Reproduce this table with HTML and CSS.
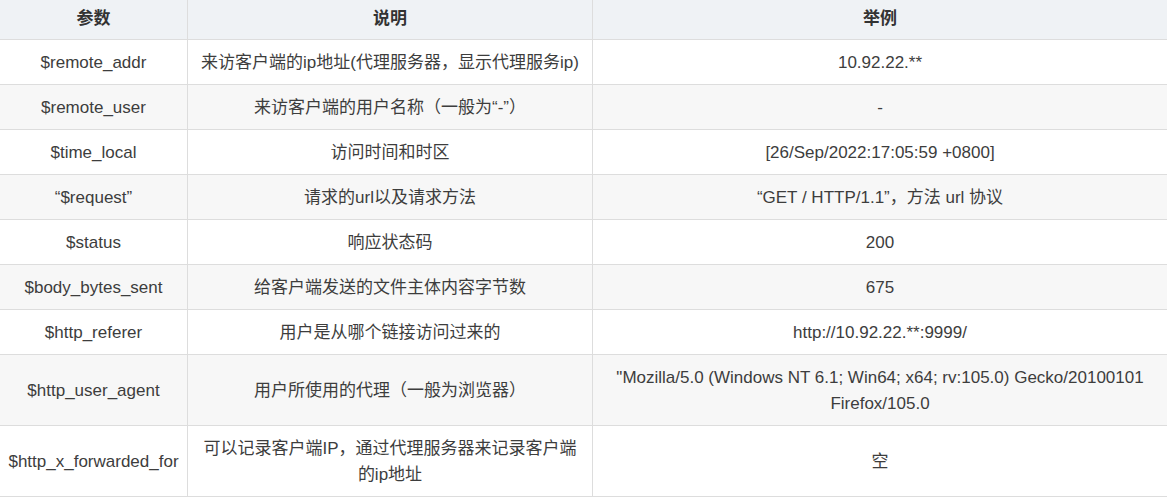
FILE: index.html
```html
<!DOCTYPE html>
<html lang="zh-CN">
<head>
<meta charset="utf-8">
<title>nginx 日志参数</title>
<link rel="stylesheet" href="styles.css">
</head>
<body>
<table class="params">
  <colgroup>
    <col class="c1">
    <col class="c2">
    <col class="c3">
  </colgroup>
  <thead>
    <tr><th>参数</th><th>说明</th><th>举例</th></tr>
  </thead>
  <tbody>
    <tr><td>$remote_addr</td><td>来访客户端的ip地址(代理服务器，显示代理服务ip)</td><td>10.92.22.**</td></tr>
    <tr><td>$remote_user</td><td>来访客户端的用户名称（一般为“-”）</td><td>-</td></tr>
    <tr><td>$time_local</td><td>访问时间和时区</td><td>[26/Sep/2022:17:05:59 +0800]</td></tr>
    <tr><td>“$request”</td><td>请求的url以及请求方法</td><td>“GET / HTTP/1.1”，方法 url 协议</td></tr>
    <tr><td>$status</td><td>响应状态码</td><td>200</td></tr>
    <tr><td>$body_bytes_sent</td><td>给客户端发送的文件主体内容字节数</td><td>675</td></tr>
    <tr><td>$http_referer</td><td>用户是从哪个链接访问过来的</td><td>http://10.92.22.**:9999/</td></tr>
    <tr><td>$http_user_agent</td><td>用户所使用的代理（一般为浏览器）</td><td>"Mozilla/5.0 (Windows NT 6.1; Win64; x64; rv:105.0) Gecko/20100101 Firefox/105.0</td></tr>
    <tr><td>$http_x_forwarded_for</td><td>可以记录客户端IP，通过代理服务器来记录客户端的ip地址</td><td>空</td></tr>
  </tbody>
</table>
</body>
</html>
```

FILE: styles.css
```css
html, body {
  margin: 0;
  padding: 0;
  background: #ffffff;
}

body {
  font-family: "Liberation Sans", Arial, "Noto Sans CJK SC", sans-serif;
  font-size: 17px;
  color: #3d3d3d;
}

.params {
  width: 1167px;
  table-layout: fixed;
  border-collapse: separate;
  border-spacing: 0;
}

.params .c1 { width: 188px; }
.params .c2 { width: 405px; }
.params .c3 { width: 574px; }

.params th,
.params td {
  text-align: center;
  vertical-align: middle;
  line-height: 26px;
  border-bottom: 1px solid #dddddd;
  border-right: 1px solid #dddddd;
}

.params th:last-child,
.params td:last-child {
  border-right: none;
}

.params th {
  background: #eff2f5;
  font-weight: bold;
  color: #333333;
  padding: 6px 8px 7px;
}

.params td {
  padding: 10px 8px 8px;
}

.params td:first-child {
  padding-left: 3px;
  padding-right: 3px;
}

.params tbody tr:nth-child(even) td {
  background: #f7f7f7;
}
```
